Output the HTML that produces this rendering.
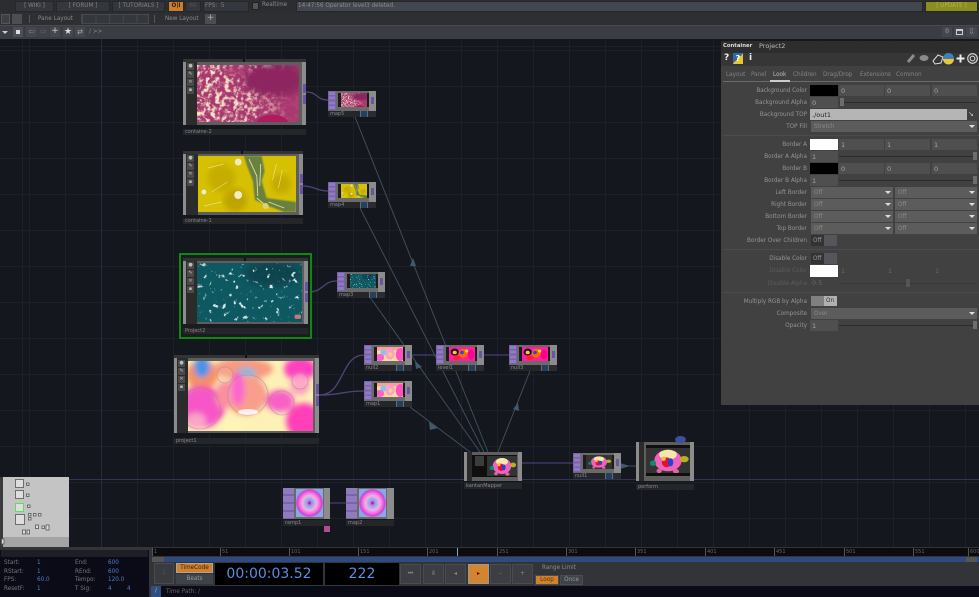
<!DOCTYPE html>
<html><head><meta charset="utf-8"><style>
*{box-sizing:border-box;margin:0;padding:0}
html,body{width:979px;height:597px;overflow:hidden;background:#15171e}
body{position:relative;font:5.7px "DejaVu Sans","Liberation Sans",sans-serif;color:#999}
.a,.b,.l,.f,.d,.s,.k,.t,.n,.op,.lb,.x{position:absolute}
.b{background:#34373d;border:1px solid #26272b;color:#808080;text-align:center;line-height:9px;height:11px;top:1px}
.t{white-space:nowrap;line-height:9px}
.l{left:721px;width:86px;text-align:right;height:11px;line-height:12px;color:#949494;white-space:nowrap}
.l.o{color:#5c5c5c}
.f{height:11px;background:#4f4f4f;line-height:12px;padding-left:2px;color:#a5a5a5;font-size:6.5px;width:45px}
.d{height:11px;background:#5c5c5c;line-height:12px;padding-left:3px;color:#8a8a8a;width:82px}
.d:after{content:"";position:absolute;right:2px;top:4px;border:3px solid transparent;border-top:3px solid #ddd}
.s{height:1px;background:#2b2b2b;left:839px;width:138px}
.k{width:4px;height:8px;background:#6d6d6d;left:973px}
.n{background:#5e5e5e}
.n i{position:absolute;display:block}
.op{width:48px;height:26px;background:linear-gradient(90deg,#6a6a6a 41px,#8c8c8c 41px)}
.op .p{position:absolute;left:0;top:0;width:8px;height:19px;background:#7a62ad;background-image:repeating-linear-gradient(#8f7cbd 0 3px,#7a62ad 3px 4.7px);border:1px solid #7a62ad}
.op .q{position:absolute;left:10px;top:2px;width:31px;height:14px;background:#1c1c1c}
.op svg{position:absolute;left:13px;top:2px;width:26px;height:14px}
.op .r{position:absolute;left:43px;top:6px;width:3px;height:7px;background:#6a55a2}
.op .lb{left:0;top:20px;width:32px;height:6px;background:#25262a;color:#888;font-size:5px;line-height:6px;padding-left:2px;white-space:nowrap;border:0}
.op .m{position:absolute;left:33px;top:20px;width:6px;height:6px;background:#23415f}
.op .e{position:absolute;left:40px;top:20px;width:8px;height:6px;background:#2b2c30}
.lb{background:#25262a;color:#888;font-size:5px;line-height:6px;padding-left:2px;height:6px;white-space:nowrap}
.sv{position:absolute;display:block}
.ic{position:absolute;width:7px;height:7px;background:#4a4a4a;color:#bbb;font-size:5px;line-height:7px;text-align:center;overflow:hidden}
.rl{position:absolute;top:548px;height:8px;border-left:1px solid #555;color:#666;font-size:5px;line-height:8px;padding-left:1px}
.sl{position:absolute;color:#777;line-height:8px;font-size:5.7px;white-space:nowrap}
.sv2{position:absolute;color:#4f7fc4;line-height:8px;font-size:5.7px}
.tb{position:absolute;top:564px;height:20px;width:21px;background:#3c3e43;border:1px solid #4a4c50;color:#888;text-align:center;line-height:18px;font-size:6px}
</style></head><body>
<svg width="0" height="0" style="position:absolute"><defs>
<filter id="nA" x="0" y="0" width="100%" height="100%"><feTurbulence type="fractalNoise" baseFrequency=".22" numOctaves="3" seed="4"/><feColorMatrix values="0 0 0 0 .93 0 0 0 0 .78 0 0 0 0 .6 3 3 0 0 -2.75"/><feGaussianBlur stdDeviation=".35"/></filter>
<filter id="nB" x="0" y="0" width="100%" height="100%"><feTurbulence type="fractalNoise" baseFrequency=".2" numOctaves="4" seed="8"/><feColorMatrix values="0 0 0 0 .7 0 0 0 0 .84 0 0 0 0 .84 6 6 0 0 -7.3"/><feGaussianBlur stdDeviation=".25"/></filter>
<filter id="bl"><feGaussianBlur stdDeviation="3"/></filter>
<filter id="bl2"><feGaussianBlur stdDeviation=".8"/></filter>
<linearGradient id="mg" x1="0" y1="0" x2="1" y2="0"><stop offset="0" stop-color="#fff"/><stop offset=".55" stop-color="#eee"/><stop offset=".9" stop-color="#111"/></linearGradient>
<mask id="mk"><rect width="100" height="56" fill="url(#mg)"/><ellipse cx="72" cy="15" rx="28" ry="14" fill="#000" filter="url(#bl)"/><ellipse cx="72" cy="56" rx="16" ry="8" fill="#000"/><ellipse cx="40" cy="6" rx="14" ry="6" fill="#222" filter="url(#bl)"/></mask>
<radialGradient id="rg"><stop offset="0" stop-color="#c01bb4"/><stop offset=".08" stop-color="#c01bb4"/><stop offset=".14" stop-color="#b080e0"/><stop offset=".32" stop-color="#9eb0ea"/><stop offset=".52" stop-color="#f2b0e4"/><stop offset=".74" stop-color="#f270de"/><stop offset=".9" stop-color="#dc40d4"/><stop offset="1" stop-color="#a070e0"/></radialGradient>
<symbol id="pink" viewBox="0 0 100 56" preserveAspectRatio="none"><rect width="100" height="56" fill="#a8386f"/><ellipse cx="75" cy="14" rx="30" ry="18" fill="#8d2660" filter="url(#bl)"/><rect width="100" height="56" filter="url(#nA)" mask="url(#mk)"/><ellipse cx="74" cy="56" rx="15" ry="7" fill="#b01a60"/></symbol>
<symbol id="yellow" viewBox="0 0 100 56" preserveAspectRatio="none"><rect width="100" height="56" fill="#d6c004"/><circle cx="24" cy="22" r="14" fill="#c6ad04" filter="url(#bl)"/><circle cx="38" cy="44" r="12" fill="#bfa406" filter="url(#bl)"/><circle cx="85" cy="28" r="10" fill="#c4aa06" filter="url(#bl)"/><path d="M47 0L65 0L68 15L65 25L70 42L100 46L100 56L88 56L72 50L58 44L56 25L50 10Z" fill="#67803f" filter="url(#bl2)"/><path d="M52 3L60 20L61 40M64 8L63 30M72 46L88 52M60 42L72 52" stroke="#e2dcae" fill="none" stroke-width=".9"/><path d="M10 12L26 8M14 36L30 26M6 50L24 46M80 8L76 24M86 14L82 32" stroke="#efe7a8" stroke-width=".7" fill="none" opacity=".8"/><circle cx="41" cy="6" r="3.5" fill="#f1eac4"/><circle cx="41" cy="39" r="4" fill="#f2ecc8"/><circle cx="6" cy="36" r="2.5" fill="#f2ecc8"/><circle cx="69" cy="50" r="3" fill="#ddd27a"/></symbol>
<symbol id="teal" viewBox="0 0 100 56" preserveAspectRatio="none"><rect width="100" height="56" fill="#0e5862"/><ellipse cx="72" cy="10" rx="26" ry="12" fill="#0a3d47" opacity=".7" filter="url(#bl)"/><rect width="100" height="56" filter="url(#nB)"/><rect x="93" y="49" width="6" height="4" fill="#c77" rx="1"/></symbol>
<symbol id="pastel" viewBox="0 0 125 70" preserveAspectRatio="none"><rect width="125" height="70" fill="#fdf2b6"/><g filter="url(#bl)"><ellipse cx="14" cy="14" rx="16" ry="15" fill="#f79060"/><ellipse cx="14" cy="6" rx="8" ry="11" fill="#4494e8"/><ellipse cx="55" cy="8" rx="30" ry="11" fill="#f79a80"/><ellipse cx="58" cy="12" rx="10" ry="5" fill="#68bce8"/><ellipse cx="112" cy="8" rx="16" ry="12" fill="#ff40c0"/><ellipse cx="13" cy="46" rx="24" ry="21" fill="#f644c0"/><ellipse cx="8" cy="60" rx="10" ry="8" fill="#fa9ac0"/><ellipse cx="58" cy="34" rx="21" ry="20" fill="#f6957f"/><ellipse cx="50" cy="28" rx="7" ry="17" fill="#fb55c8"/><ellipse cx="36" cy="34" rx="8" ry="14" fill="#f990a0"/><ellipse cx="92" cy="40" rx="14" ry="11" fill="#f850c0"/><ellipse cx="116" cy="60" rx="18" ry="18" fill="#ff40b8"/><ellipse cx="112" cy="24" rx="10" ry="10" fill="#fca0c0"/><ellipse cx="45" cy="64" rx="12" ry="6" fill="#fdf4b6"/></g><g fill="#ffffff" fill-opacity=".1" stroke="#a88a90" stroke-opacity=".6" stroke-width=".8"><circle cx="60" cy="34" r="20"/><circle cx="37" cy="14" r="8"/><circle cx="94" cy="42" r="12"/><circle cx="12" cy="48" r="20"/><circle cx="112" cy="20" r="8"/></g><ellipse cx="60" cy="51" rx="10" ry="3" fill="#fff" opacity=".8"/></symbol>
<symbol id="past2" viewBox="0 0 100 56" preserveAspectRatio="none"><rect width="100" height="56" fill="#f8dc9c"/><rect width="100" height="14" fill="#fba098"/><ellipse cx="25" cy="22" rx="12" ry="12" fill="#7cc8ee"/><ellipse cx="10" cy="42" rx="18" ry="14" fill="#ff60cc"/><ellipse cx="50" cy="28" rx="18" ry="22" fill="#fb9ed0"/><ellipse cx="90" cy="30" rx="18" ry="26" fill="#ff50c0"/><ellipse cx="52" cy="30" rx="8" ry="9" fill="#f7d080"/></symbol>
<symbol id="hot" viewBox="0 0 100 56" preserveAspectRatio="none"><rect width="100" height="56" fill="#ff1ea0"/><ellipse cx="22" cy="20" rx="16" ry="14" fill="#1a0a40"/><ellipse cx="22" cy="22" rx="8" ry="7" fill="#ffd000"/><ellipse cx="55" cy="25" rx="18" ry="18" fill="#ff6a00"/><ellipse cx="50" cy="22" rx="7" ry="7" fill="#2244ee"/><ellipse cx="85" cy="30" rx="13" ry="20" fill="#ff0090"/><ellipse cx="68" cy="16" rx="6" ry="6" fill="#ffdd22"/><ellipse cx="30" cy="44" rx="14" ry="8" fill="#ff2020"/></symbol>
<symbol id="turtle" viewBox="0 0 100 60" preserveAspectRatio="none"><rect width="100" height="60" fill="#333"/><ellipse cx="50" cy="30" rx="31" ry="24" fill="#f062bc"/><ellipse cx="50" cy="17" rx="20" ry="11" fill="#f4eaa8"/><ellipse cx="47" cy="34" rx="11" ry="11" fill="#dd1133"/><ellipse cx="56" cy="34" rx="6" ry="9" fill="#2244dd"/><ellipse cx="40" cy="26" rx="5" ry="5" fill="#f0c040"/><ellipse cx="87" cy="27" rx="10" ry="7" fill="#b8b020"/><ellipse cx="16" cy="36" rx="7" ry="6" fill="#118877"/><ellipse cx="30" cy="53" rx="6" ry="5" fill="#d86aa0"/><ellipse cx="68" cy="54" rx="7" ry="5" fill="#d86aa0"/></symbol>
<symbol id="ramp" viewBox="0 0 100 100" preserveAspectRatio="none"><rect width="100" height="100" fill="#88a8e8"/><circle cx="50" cy="50" r="50" fill="url(#rg)"/></symbol>
</defs></svg>

<!-- network background -->
<div class="a" style="left:0;top:39px;width:979px;height:508px;background-color:#15171e;background-image:repeating-linear-gradient(90deg,#1e2027 0 1px,transparent 1px 36px),repeating-linear-gradient(180deg,#1e2027 0 1px,transparent 1px 36px);background-position:29px 0,0 11px"></div>
<div class="a" style="left:101px;top:39px;width:1px;height:508px;background:#2a2a45"></div>
<div class="a" style="left:0;top:479px;width:979px;height:1px;background:#33325a"></div>

<!-- wires -->
<svg class="sv" style="left:0;top:0" width="979" height="597" fill="none">
<g stroke="#4f4478" stroke-width="1.3">
<path d="M306 92C318 92 316 100 328 100"/><path d="M303 186C315 186 316 191 328 191"/><path d="M308 292C324 292 322 281 337 281"/>
<path d="M319 395C345 395 340 355 364 355"/><path d="M319 395C345 395 340 391 364 391"/>
</g>
<g stroke="#3f3766" stroke-width="1.6"><path d="M412 355H436M484 355H509M522 463H573M330 503H346"/></g>
<g stroke="#41525f" stroke-width=".9"><path d="M355 117L488 452M360 208L484 452M367 293L480 452M410 407L470 452M530 371L498 452M621 466H636"/></g>
<g fill="#40596c"><path d="M413 258L416 266L410 266Z"/><path d="M415 361L422 367L416 369Z"/><path d="M429 422L438 428L430 430Z"/><path d="M518 403L519 411L513 409Z"/><path d="M620 463L630 466L620 469Z"/></g>
</svg>

<!-- big containers -->
<div class="n" style="left:183px;top:59px;width:123px;height:66px"><i style="left:0;top:3px;width:3px;height:63px;background:#8c8c8c"></i><i style="left:3px;top:3px;width:11px;height:63px;background:#2b2b2b"></i><i style="left:119px;top:3px;width:4px;height:63px;background:#8c8c8c"></i><i style="left:0;top:0;width:123px;height:3px;background:#333"></i><i style="left:60px;top:0;width:2px;height:3px;background:#111"></i></div>
<div class="ic" style="left:187px;top:63px">●</div><div class="ic" style="left:187px;top:71px">✎</div><div class="ic" style="left:187px;top:79px">✕</div><div class="ic" style="left:187px;top:87px">▪</div>
<div class="lb a" style="left:183px;top:129px;width:123px">containe-2</div>
<svg class="sv" style="left:197px;top:65px" width="102" height="57"><use href="#pink" width="102" height="57"/></svg>
<i class="a" style="left:303px;top:84px;width:3px;height:9px;background:#6a55a2"></i><i class="a" style="left:303px;top:95px;width:3px;height:9px;background:#6a55a2"></i>

<div class="n" style="left:183px;top:151px;width:120px;height:64px"><i style="left:0;top:3px;width:3px;height:61px;background:#8c8c8c"></i><i style="left:3px;top:3px;width:12px;height:61px;background:#2b2b2b"></i><i style="left:116px;top:3px;width:4px;height:61px;background:#8c8c8c"></i><i style="left:0;top:0;width:120px;height:3px;background:#333"></i><i style="left:58px;top:0;width:2px;height:3px;background:#111"></i></div>
<div class="ic" style="left:187px;top:155px">●</div><div class="ic" style="left:187px;top:163px">✎</div><div class="ic" style="left:187px;top:171px">✕</div><div class="ic" style="left:187px;top:179px">▪</div>
<div class="lb a" style="left:183px;top:218px;width:120px">containe-1</div>
<svg class="sv" style="left:198px;top:156px" width="98" height="56"><use href="#yellow" width="98" height="56"/></svg>
<i class="a" style="left:300px;top:174px;width:3px;height:9px;background:#6a55a2"></i><i class="a" style="left:300px;top:185px;width:3px;height:9px;background:#6a55a2"></i>

<div class="a" style="left:179px;top:253px;width:133px;height:86px;border:2px solid #0c8a10;background:#1b1c20"></div>
<div class="n" style="left:183px;top:258px;width:125px;height:66px"><i style="left:0;top:3px;width:3px;height:63px;background:#8c8c8c"></i><i style="left:3px;top:3px;width:11px;height:63px;background:#2b2b2b"></i><i style="left:121px;top:3px;width:4px;height:63px;background:#8c8c8c"></i><i style="left:0;top:0;width:125px;height:3px;background:#333"></i><i style="left:61px;top:0;width:2px;height:3px;background:#111"></i></div>
<div class="ic" style="left:187px;top:262px">●</div><div class="ic" style="left:187px;top:270px">✎</div><div class="ic" style="left:187px;top:278px">✕</div><div class="ic" style="left:187px;top:286px">▪</div>
<div class="lb a" style="left:183px;top:328px;width:125px">Project2</div>
<svg class="sv" style="left:197px;top:263px" width="105" height="59"><use href="#teal" width="105" height="59"/></svg>
<i class="a" style="left:305px;top:282px;width:3px;height:9px;background:#6a55a2"></i><i class="a" style="left:305px;top:293px;width:3px;height:9px;background:#6a55a2"></i>

<div class="n" style="left:174px;top:355px;width:145px;height:78px"><i style="left:0;top:3px;width:3px;height:75px;background:#8c8c8c"></i><i style="left:3px;top:3px;width:11px;height:75px;background:#2b2b2b"></i><i style="left:141px;top:3px;width:4px;height:75px;background:#8c8c8c"></i><i style="left:0;top:0;width:145px;height:3px;background:#333"></i><i style="left:71px;top:0;width:2px;height:3px;background:#111"></i></div>
<div class="ic" style="left:178px;top:360px">●</div><div class="ic" style="left:178px;top:368px">✎</div><div class="ic" style="left:178px;top:376px">✕</div><div class="ic" style="left:178px;top:384px">▪</div>
<div class="lb a" style="left:174px;top:438px;width:145px">project1</div>
<svg class="sv" style="left:188px;top:361px" width="125" height="70"><use href="#pastel" width="125" height="70"/></svg>
<i class="a" style="left:316px;top:384px;width:3px;height:10px;background:#6a55a2"></i><i class="a" style="left:316px;top:396px;width:3px;height:10px;background:#6a55a2"></i>

<!-- small ops -->
<div class="op" style="left:328px;top:91px"><div class="p"></div><div class="q"></div><svg><use href="#pink" width="26" height="14"/></svg><div class="r"></div><div class="lb">map5</div><div class="m"></div><div class="e"></div></div>
<div class="op" style="left:328px;top:182px"><div class="p"></div><div class="q"></div><svg><use href="#yellow" width="26" height="14"/></svg><div class="r"></div><div class="lb">map4</div><div class="m"></div><div class="e"></div></div>
<div class="op" style="left:337px;top:272px"><div class="p"></div><div class="q"></div><svg><use href="#teal" width="26" height="14"/></svg><div class="r"></div><div class="lb">map3</div><div class="m"></div><div class="e"></div></div>
<div class="op" style="left:364px;top:345px"><div class="p"></div><div class="q"></div><svg><use href="#past2" width="26" height="14"/></svg><div class="r"></div><div class="lb">null2</div><div class="m"></div><div class="e"></div></div>
<div class="op" style="left:364px;top:381px"><div class="p"></div><div class="q"></div><svg><use href="#past2" width="26" height="14"/></svg><div class="r"></div><div class="lb">map1</div><div class="m"></div><div class="e"></div></div>
<div class="op" style="left:436px;top:345px"><div class="p"></div><div class="q"></div><svg><use href="#hot" width="26" height="14"/></svg><div class="r"></div><div class="lb">level1</div><div class="m"></div><div class="e"></div></div>
<div class="op" style="left:509px;top:345px"><div class="p"></div><div class="q"></div><svg><use href="#hot" width="26" height="14"/></svg><div class="r"></div><div class="lb">null3</div><div class="m"></div><div class="e"></div></div>
<div class="op" style="left:573px;top:453px"><div class="p"></div><div class="q"></div><svg><use href="#turtle" width="26" height="14"/></svg><div class="r"></div><div class="lb">null1</div><div class="m"></div><div class="e"></div></div>

<!-- kantanMapper -->
<div class="n" style="left:464px;top:452px;width:58px;height:29px"><i style="left:0;top:0;width:3px;height:29px;background:#8c8c8c"></i><i style="left:3px;top:0;width:5px;height:29px;background:#2b2b2b"></i><i style="left:54px;top:0;width:4px;height:29px;background:#8c8c8c"></i></div>
<div class="a" style="left:472px;top:455px;width:45px;height:22px;background:#0f0f0f"></div>
<div class="a" style="left:475px;top:456px;width:9px;height:10px;background:#3c3c3c"></div>
<svg class="sv" style="left:487px;top:456px" width="30" height="20"><use href="#turtle" width="30" height="20"/></svg>
<div class="lb a" style="left:464px;top:483px;width:58px">kantanMapper</div>

<!-- perform -->
<div class="n" style="left:636px;top:442px;width:58px;height:39px"><i style="left:0;top:0;width:3px;height:39px;background:#8c8c8c"></i><i style="left:3px;top:0;width:5px;height:39px;background:#2b2b2b"></i><i style="left:54px;top:0;width:4px;height:39px;background:#8c8c8c"></i></div>
<svg class="sv" style="left:646px;top:447px" width="44" height="27"><use href="#turtle" width="44" height="27"/></svg>
<div class="a" style="left:646px;top:445px;width:44px;height:3px;background:#0f0f0f"></div>
<div class="a" style="left:646px;top:473px;width:44px;height:3px;background:#0f0f0f"></div>
<div class="lb a" style="left:636px;top:484px;width:58px">perform</div>
<div class="a" style="left:675px;top:436px;width:11px;height:7px;background:#3f4f9f;border-radius:50%"></div>

<!-- ramp -->
<div class="n" style="left:283px;top:488px;width:47px;height:31px;background:linear-gradient(90deg,#6a6a6a 41px,#8c8c8c 41px)"><i style="left:0;top:0;width:11px;height:31px;background:#7a62ad;background-image:repeating-linear-gradient(#8f7cbd 0 6px,#7a62ad 6px 8px)"></i></div>
<svg class="sv" style="left:296px;top:489px" width="27" height="28"><use href="#ramp" width="27" height="28"/></svg>
<div class="lb a" style="left:283px;top:520px;width:47px">ramp1</div>
<div class="a" style="left:324px;top:526px;width:6px;height:6px;background:#b04d90"></div>
<div class="n" style="left:346px;top:488px;width:48px;height:31px;background:linear-gradient(90deg,#6a6a6a 41px,#8c8c8c 41px)"><i style="left:0;top:0;width:11px;height:31px;background:#7a62ad;background-image:repeating-linear-gradient(#8f7cbd 0 6px,#7a62ad 6px 8px)"></i></div>
<svg class="sv" style="left:359px;top:489px" width="27" height="28"><use href="#ramp" width="27" height="28"/></svg>
<div class="lb a" style="left:346px;top:520px;width:48px">map2</div>

<!-- minimap -->
<div class="a" style="left:0;top:477px;width:69px;height:70px;background:#3a3a3a"></div>
<div class="a" style="left:3px;top:477px;width:66px;height:60px;background:#c4c4c4"></div>
<div class="a" style="left:3px;top:537px;width:66px;height:10px;background:#a4a4a4"></div>
<svg class="sv" style="left:0;top:477px" width="69" height="70">
<g fill="#dedede" stroke="#555" stroke-width=".8"><rect x="15.5" y="2.5" width="8" height="8"/><rect x="15.5" y="13.5" width="8" height="8"/><rect x="15.5" y="26.5" width="8" height="8" stroke="#4d4"/><rect x="15.5" y="37.5" width="9" height="10"/><rect x="26.5" y="6" width="2.5" height="2.5"/><rect x="26.5" y="17" width="2.5" height="2.5"/><rect x="27.5" y="28" width="2.5" height="2.5"/><rect x="28.5" y="36.5" width="2.5" height="2.5"/><rect x="33.5" y="36.5" width="2.5" height="2.5"/><rect x="38.5" y="36.5" width="2.5" height="2.5"/><rect x="28.5" y="40.5" width="2.5" height="2.5"/><rect x="35.5" y="48" width="3" height="3.5"/><rect x="42" y="49" width="2.5" height="2.5"/><rect x="46" y="48" width="3" height="5"/><rect x="22.5" y="53" width="3" height="4"/><rect x="27" y="53" width="2.5" height="4"/><rect x="1.5" y="62" width="2.5" height="5"/></g>
</svg>

<!-- top bar -->
<div class="a" style="left:0;top:0;width:979px;height:13px;background:#2c2d30"></div>
<div class="b" style="left:15px;width:39px">[ WIKI ]</div>
<div class="b" style="left:56px;width:54px">[ FORUM ]</div>
<div class="b" style="left:112px;width:53px">[ TUTORIALS ]</div>
<div class="b" style="left:168px;width:16px;background:#c8802f;color:#3d1d06;font-weight:bold">O|I</div>
<div class="b" style="left:185px;width:16px;color:#555">60</div>
<div class="b" style="left:203px;width:46px;text-align:left;padding-left:1px">FPS:&nbsp; 5</div>
<div class="a" style="left:252px;top:2px;width:7px;height:8px;background:#555;border:1px solid #222"></div>
<div class="t" style="left:262px;top:1px;color:#8a8a8a">Realtime</div>
<div class="b" style="left:296px;width:627px;background:#41464f;text-align:left;padding-left:1px;color:#8c8c8c">14:47:56 Operator level3 deleted.</div>
<div class="b" style="left:925px;width:53px;background:#8b8d1c;color:#b1b35a">[ UPDATE ]</div>

<!-- row 2 -->
<div class="a" style="left:0;top:13px;width:979px;height:12px;background:#2e2f32"></div>
<div class="a" style="left:1px;top:14px;width:9px;height:10px;background:#3d3f44;border:1px solid #555"></div>
<div class="a" style="left:12px;top:14px;width:10px;height:10px;background:#4c4e52"></div>
<div class="a" style="left:29px;top:15px;width:1px;height:8px;background:#555"></div>
<div class="t" style="left:38px;top:15px;color:#8a8a8a">Pane Layout</div>
<div class="a" style="left:81px;top:14px;width:68px;height:10px;background:#34373c;background-image:linear-gradient(90deg,#46484d 1px,transparent 1px);background-size:13.6px 1px;border:1px solid #46484d"></div>
<div class="a" style="left:154px;top:15px;width:1px;height:8px;background:#555"></div>
<div class="t" style="left:165px;top:15px;color:#8a8a8a">New Layout</div>
<div class="a" style="left:205px;top:14px;width:11px;height:10px;background:#4b4d52;color:#aaa;text-align:center;line-height:9px;font-size:9px">+</div>

<!-- row 3 -->
<div class="a" style="left:0;top:25px;width:979px;height:14px;background:#3a3d44;border-top:1px solid #4a4b4e"></div>
<div class="a" style="left:2px;top:31px;border:3px solid transparent;border-top:3px solid #ccc"></div>
<div class="a" style="left:13px;top:27px;width:10px;height:10px;background:#4c4f55"><i class="a" style="left:3px;top:3px;width:4px;height:4px;background:#ddd"></i></div>
<div class="a" style="left:26px;top:27px;width:11px;height:10px;background:#44474d;color:#888;font-size:8px;line-height:10px;text-align:center">⇦</div>
<div class="a" style="left:38px;top:27px;width:11px;height:10px;background:#3f4248;color:#666;font-size:8px;line-height:10px;text-align:center">⇨</div>
<div class="a" style="left:50px;top:27px;width:10px;height:10px;background:#44474d;color:#ccc;font-size:9px;line-height:9px;text-align:center">+</div>
<div class="a" style="left:63px;top:27px;width:10px;height:10px;background:#44474d;color:#ddd;font-size:9px;line-height:10px;text-align:center">★</div>
<div class="a" style="left:75px;top:27px;width:10px;height:10px;background:#44474d;color:#aaa;font-size:7px;line-height:10px;text-align:center">⇄</div>
<div class="t" style="left:89px;top:28px;color:#888">/ &gt;&gt;</div>
<div class="a" style="left:942px;top:27px;width:10px;height:10px;background:#44474d;color:#aaa;text-align:center;line-height:10px">0</div>
<div class="a" style="left:954px;top:27px;width:11px;height:10px;background:#44474d"><i class="a" style="left:2px;top:2px;width:7px;height:6px;border:1px solid #ccc;border-top-width:2px"></i></div>
<div class="a" style="left:966px;top:27px;width:11px;height:10px;background:#44474d;color:#999;font-size:8px;line-height:10px;text-align:center">⇩</div>

<!-- parameter panel -->
<div class="a" style="left:721px;top:41px;width:258px;height:364px;background:#414141"></div>
<div class="a" style="left:721px;top:41px;width:258px;height:12px;background:#2d2d2d"></div>
<div class="a" style="left:721px;top:53px;width:258px;height:13px;background:#363636"></div>
<div class="t" style="left:723px;top:42px;color:#ddd;font-weight:bold;font-size:5.3px">Container</div>
<div class="t" style="left:759px;top:42px;color:#bbb;font-size:6.5px">Project2</div>
<div class="t" style="left:724px;top:54px;color:#eee;font-weight:bold;font-size:9px">?</div>
<div class="a" style="left:733px;top:53px;width:10px;height:11px;background:linear-gradient(135deg,#2f6aa8 50%,#e9c62c 50%);color:#fff;font-weight:bold;font-size:8px;line-height:11px;text-align:center">?</div>
<div class="t" style="left:749px;top:54px;color:#eee;font-weight:bold;font-size:9px">i</div>
<svg class="sv" style="left:905px;top:52px" width="74" height="14" fill="none">
<path d="M3 10L9 3" stroke="#8a8a8a" stroke-width="3"/>
<ellipse cx="19" cy="6" rx="4.5" ry="3" fill="#8a8a8a"/>
<path d="M28 9L33 3L38 5L36 11L30 12Z" stroke="#ddd"/>
<circle cx="43.5" cy="6.5" r="5.5" fill="#3d7fb8"/><path d="M38 7H49A5.5 5.5 0 0 1 38 7Z" fill="#eac63a"/>
<path d="M55.5 2.5V10.5M51.5 6.5H59.5" stroke="#eee" stroke-width="2"/>
<circle cx="67.5" cy="6.5" r="4.8" stroke="#ddd" stroke-width="1.1"/><circle cx="67.5" cy="6.5" r="2.4" stroke="#ddd"/>
</svg>

<div class="t" style="left:726px;top:71px;color:#848484">Layout</div>
<div class="t" style="left:751px;top:71px;color:#848484">Panel</div>
<div class="t" style="left:773px;top:71px;color:#bbb">Look</div>
<div class="t" style="left:793px;top:71px;color:#848484">Children</div>
<div class="t" style="left:823px;top:71px;color:#848484">Drag/Drop</div>
<div class="t" style="left:860px;top:71px;color:#848484">Extensions</div>
<div class="t" style="left:896px;top:71px;color:#848484">Common</div>
<div class="a" style="left:723px;top:81px;width:256px;height:1px;background:#6a6a6a"></div>
<div class="a" style="left:770px;top:80px;width:20px;height:2px;background:#ccc"></div>

<div class="l" style="top:85px">Background Color</div><div class="a" style="left:810px;top:85px;width:28px;height:11px;background:#000"></div><div class="f" style="left:839px;top:85px">0</div><div class="f" style="left:885px;top:85px">0</div><div class="f" style="left:932px;top:85px">0</div>
<div class="l" style="top:97px">Background Alpha</div><div class="f" style="left:810px;top:97px;width:28px">0</div><div class="s" style="top:102px"></div><div class="k" style="left:840px;top:98px"></div>
<div class="l" style="top:109px">Background TOP</div><div class="a" style="left:810px;top:109px;width:157px;height:11px;background:#b5b5b5;color:#222;font-size:6.5px;line-height:12px;padding-left:2px">./out1</div><div class="t" style="left:968px;top:110px;color:#ccc;font-size:7px">↘</div>
<div class="l" style="top:121px">TOP Fill</div><div class="d" style="left:811px;top:121px;width:166px">Stretch</div>
<div class="a" style="left:723px;top:135px;width:256px;height:1px;background:#4c4c4c"></div>

<div class="l" style="top:139px">Border A</div><div class="a" style="left:810px;top:139px;width:28px;height:11px;background:#fff"></div><div class="f" style="left:839px;top:139px">1</div><div class="f" style="left:885px;top:139px">1</div><div class="f" style="left:932px;top:139px">1</div>
<div class="l" style="top:151px">Border A Alpha</div><div class="f" style="left:810px;top:151px;width:28px">1</div><div class="s" style="top:156px"></div><div class="k" style="top:152px"></div>
<div class="l" style="top:163px">Border B</div><div class="a" style="left:810px;top:163px;width:28px;height:11px;background:#000"></div><div class="f" style="left:839px;top:163px">0</div><div class="f" style="left:885px;top:163px">0</div><div class="f" style="left:932px;top:163px">0</div>
<div class="l" style="top:175px">Border B Alpha</div><div class="f" style="left:810px;top:175px;width:28px">1</div><div class="s" style="top:180px"></div><div class="k" style="top:176px"></div>
<div class="l" style="top:187px">Left Border</div><div class="d" style="left:811px;top:187px">Off</div><div class="d" style="left:895px;top:187px">Off</div>
<div class="l" style="top:199px">Right Border</div><div class="d" style="left:811px;top:199px">Off</div><div class="d" style="left:895px;top:199px">Off</div>
<div class="l" style="top:211px">Bottom Border</div><div class="d" style="left:811px;top:211px">Off</div><div class="d" style="left:895px;top:211px">Off</div>
<div class="l" style="top:223px">Top Border</div><div class="d" style="left:811px;top:223px">Off</div><div class="d" style="left:895px;top:223px">Off</div>
<div class="l" style="top:235px">Border Over Children</div><div class="a" style="left:811px;top:235px;width:13px;height:11px;background:#333;color:#999;line-height:12px;padding-left:2px">Off</div><div class="a" style="left:824px;top:235px;width:13px;height:11px;background:#55565c"></div>
<div class="a" style="left:723px;top:249px;width:256px;height:1px;background:#4c4c4c"></div>

<div class="l" style="top:253px">Disable Color</div><div class="a" style="left:811px;top:253px;width:13px;height:11px;background:#333;color:#999;line-height:12px;padding-left:2px">Off</div><div class="a" style="left:824px;top:253px;width:13px;height:11px;background:#55565c"></div>
<div class="l o" style="top:265px">Disable Color</div><div class="a" style="left:810px;top:265px;width:28px;height:12px;background:#fff"></div><div class="t" style="left:841px;top:267px;color:#666;font-size:6.5px">1</div><div class="t" style="left:888px;top:267px;color:#666;font-size:6.5px">1</div><div class="t" style="left:935px;top:267px;color:#666;font-size:6.5px">1</div>
<div class="l o" style="top:278px">Disable Alpha</div><div class="t" style="left:812px;top:279px;color:#666;font-size:6.5px">0.5</div><div class="s" style="top:283px;background:#383838"></div><div class="k" style="left:906px;top:279px;background:#555"></div>
<div class="a" style="left:723px;top:292px;width:256px;height:1px;background:#4c4c4c"></div>

<div class="l" style="top:296px">Multiply RGB by Alpha</div><div class="a" style="left:811px;top:296px;width:13px;height:10px;background:#808080"></div><div class="a" style="left:824px;top:296px;width:13px;height:10px;background:#b0b0b0;color:#333;line-height:11px;padding-left:2px">On</div>
<div class="l" style="top:308px">Composite</div><div class="d" style="left:811px;top:308px;width:166px">Over</div>
<div class="l" style="top:320px">Opacity</div><div class="f" style="left:810px;top:320px;width:28px">1</div><div class="s" style="top:325px"></div><div class="k" style="top:321px"></div>

<!-- bottom -->
<div class="a" style="left:0;top:547px;width:979px;height:50px;background:#333437"></div>
<div class="a" style="left:0;top:550px;width:149px;height:47px;background:#0b0b17"></div>
<div class="a" style="left:1px;top:550px;width:147px;height:7px;background:#1d1e26"></div>
<div class="sl" style="left:4px;top:559px">Start:</div><div class="sv2" style="left:37px;top:559px">1</div><div class="sl" style="left:75px;top:559px">End:</div><div class="sv2" style="left:108px;top:559px">600</div>
<div class="sl" style="left:4px;top:568px">RStart:</div><div class="sv2" style="left:37px;top:568px">1</div><div class="sl" style="left:75px;top:568px">REnd:</div><div class="sv2" style="left:108px;top:568px">600</div>
<div class="sl" style="left:4px;top:576px">FPS:</div><div class="sv2" style="left:37px;top:576px">60.0</div><div class="sl" style="left:75px;top:576px">Tempo:</div><div class="sv2" style="left:108px;top:576px">120.0</div>
<div class="sl" style="left:4px;top:585px">ResetF:</div><div class="sv2" style="left:37px;top:585px">1</div><div class="sl" style="left:75px;top:585px">T Sig:</div><div class="sv2" style="left:108px;top:585px">4</div><div class="sv2" style="left:127px;top:585px">4</div>

<div class="a" style="left:152px;top:548px;width:827px;height:8px;background:#0b0b10"></div>
<div class="rl" style="left:152px">1</div><div class="rl" style="left:220px">51</div><div class="rl" style="left:289px">101</div><div class="rl" style="left:358px">151</div><div class="rl" style="left:427px">201</div><div class="rl" style="left:497px">251</div><div class="rl" style="left:566px">301</div><div class="rl" style="left:635px">351</div><div class="rl" style="left:705px">401</div><div class="rl" style="left:774px">451</div><div class="rl" style="left:844px">501</div><div class="rl" style="left:913px">551</div><div class="rl" style="left:968px">600</div>
<div class="a" style="left:457px;top:548px;width:1px;height:8px;background:#7fa6dc"></div>
<div class="a" style="left:152px;top:557px;width:827px;height:5px;background:#2e4a80"></div>
<div class="a" style="left:152px;top:557px;width:12px;height:5px;background:#555"></div>
<div class="a" style="left:966px;top:557px;width:11px;height:5px;background:#555"></div>

<div class="a" style="left:154px;top:563px;width:20px;height:21px;background:#3a3b40;border:1px solid #4a4b50;color:#555;text-align:center;line-height:19px">1</div>
<div class="a" style="left:176px;top:563px;width:37px;height:10px;background:#cf812d;border:1px solid #a6a6a6;color:#3d2006;text-align:center;line-height:8px">TimeCode</div>
<div class="a" style="left:176px;top:574px;width:37px;height:10px;background:#3e4249;color:#999;text-align:center;line-height:10px">Beats</div>
<div class="a" style="left:215px;top:563px;width:108px;height:22px;background:#000;color:#5b8fe0;font:14px/22px 'DejaVu Sans',sans-serif;text-align:center;white-space:nowrap">00:00:03.52</div>
<div class="a" style="left:325px;top:563px;width:74px;height:22px;background:#000;color:#5b8fe0;font:14px/22px 'DejaVu Sans',sans-serif;text-align:center">222</div>

<div class="tb" style="left:400px">⏮</div><div class="tb" style="left:423px">Ⅱ</div><div class="tb" style="left:445px">◂</div><div class="tb" style="left:468px;background:#d2842f;color:#511;border-color:#999">▸</div><div class="tb" style="left:490px">-</div><div class="tb" style="left:512px">+</div>
<div class="t" style="left:542px;top:564px;color:#8a8a8a">Range Limit</div>
<div class="a" style="left:535px;top:575px;width:24px;height:10px;background:#cf812d;border:1px solid #4a4c50;color:#5a300c;text-align:center;line-height:8px">Loop</div>
<div class="a" style="left:560px;top:575px;width:23px;height:10px;background:#3e4249;border:1px solid #4a4c50;color:#999;text-align:center;line-height:8px">Once</div>

<div class="a" style="left:151px;top:586px;width:828px;height:11px;background:#0b0b17"></div>
<div class="a" style="left:151px;top:586px;width:10px;height:11px;background:#2f4f80;color:#9bb9e6;text-align:center;line-height:11px">/</div>
<div class="t" style="left:166px;top:588px;color:#666">Time Path: /</div>
</body></html>
